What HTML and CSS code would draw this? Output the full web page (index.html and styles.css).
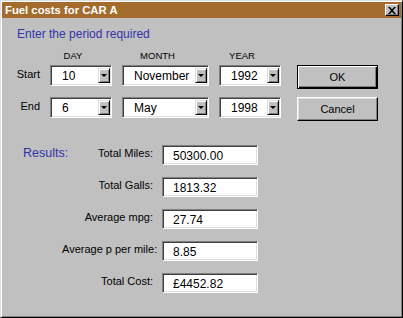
FILE: index.html
```html
<!DOCTYPE html>
<html lang="en">
<head>
  <meta charset="UTF-8">
  <title>Fuel costs for CAR A</title>
  <link rel="stylesheet" href="styles.css">
</head>
<body>
  <div class="dialog">
    <div class="titlebar">
      <span class="title">Fuel costs for CAR A</span>
      <span class="close">
        <svg width="8" height="7" viewBox="0 0 8 7"><path d="M0 0h2l2 2.2L6 0h2L5 3.5 8 7H6L4 4.8 2 7H0l3-3.5z" fill="#000"/></svg>
      </span>
    </div>

    <div class="content">
      <p class="prompt">Enter the period required</p>

      <div class="col-heads">
        <span></span>
        <span>DAY</span>
        <span>MONTH</span>
        <span>YEAR</span>
      </div>

      <div class="period">
        <label class="row-label">Start</label>
        <div class="combo"><span>10</span><i class="drop"></i></div>
        <div class="combo"><span>November</span><i class="drop"></i></div>
        <div class="combo"><span>1992</span><i class="drop"></i></div>
        <button class="btn default">OK</button>

        <label class="row-label">End</label>
        <div class="combo"><span>6</span><i class="drop"></i></div>
        <div class="combo"><span>May</span><i class="drop"></i></div>
        <div class="combo"><span>1998</span><i class="drop"></i></div>
        <button class="btn">Cancel</button>
      </div>

      <div class="results">
        <span class="results-head">Results:</span>
        <span class="field-label">Total Miles:</span>
        <div class="field">50300.00</div>

        <span></span>
        <span class="field-label">Total Galls:</span>
        <div class="field">1813.32</div>

        <span></span>
        <span class="field-label">Average mpg:</span>
        <div class="field">27.74</div>

        <span></span>
        <span class="field-label">Average p per mile:</span>
        <div class="field">8.85</div>

        <span></span>
        <span class="field-label">Total Cost:</span>
        <div class="field">£4452.82</div>
      </div>
    </div>
  </div>
</body>
</html>
```

FILE: styles.css
```css
* {
  box-sizing: border-box;
}
body {
  margin: 0;
  font-family: "Liberation Sans", Arial, sans-serif;
  color: #000;
  background: #c0c0c0;
}
.dialog {
  width: 403px;
  height: 318px;
  padding: 1px;
  background: #c0c0c0;
  border: 1px solid;
  border-color: #dfdfdf #000 #000 #dfdfdf;
  box-shadow: inset 1px 1px #fff, inset -1px -1px #808080;
}
.titlebar {
  height: 16px;
  background: #a46c2c;
  display: flex;
  align-items: center;
  justify-content: space-between;
  padding: 0 2px 0 3px;
}
.title {
  color: #fff;
  font-weight: bold;
  font-size: 11.3px;
}
.close {
  width: 14px;
  height: 12px;
  background: #c0c0c0;
  border: 1px solid;
  border-color: #fff #000 #000 #fff;
  box-shadow: inset -1px -1px #808080;
  display: flex;
  align-items: center;
  justify-content: center;
}
.content {
  padding-top: 9px;
}
.prompt {
  margin: 0 0 9px 15px;
  font-size: 12px;
  line-height: 14px;
  color: #3333aa;
}
.col-heads, .period {
  display: grid;
  grid-template-columns: 38px 62px 87px 62px 87px;
  column-gap: 10px;
}
.col-heads {
  font-size: 9.5px;
  line-height: 12px;
  height: 12px;
  margin-bottom: 3px;
}
.col-heads span {
  text-align: center;
  padding-right: 16px;
}
.period {
  grid-template-rows: 24px 24px;
  row-gap: 8px;
  align-items: start;
}
.row-label {
  font-size: 11px;
  line-height: 18px;
  text-align: right;
}
.combo {
  height: 21px;
  background: #fff;
  border: 1px solid;
  border-color: #808080 #fff #fff #808080;
  box-shadow: inset 1px 1px #404040, inset -1px -1px #dfdfdf;
  display: flex;
  align-items: center;
  justify-content: space-between;
  padding: 2px 1px 2px 11px;
  font-size: 12px;
}
.drop {
  width: 12px;
  height: 15px;
  background: #c0c0c0;
  border: 1px solid;
  border-color: #dfdfdf #000 #000 #dfdfdf;
  box-shadow: inset 1px 1px #fff, inset -1px -1px #808080;
  display: flex;
  align-items: center;
  justify-content: center;
}
.drop::after {
  content: "";
  border-left: 3px solid transparent;
  border-right: 3px solid transparent;
  border-top: 3px solid #000;
}
.btn {
  justify-self: end;
  width: 81px;
  height: 24px;
  font-family: inherit;
  font-size: 11px;
  color: #000;
  background: #c0c0c0;
  border: 1px solid;
  border-color: #fff #000 #000 #fff;
  box-shadow: inset -1px -1px #808080, inset 1px 1px #dfdfdf;
  padding: 0;
}
.btn.default {
  border: 1px solid #000;
  box-shadow: inset 1px 1px #fff, inset -1px -1px #000, inset -2px -2px #808080;
}
.results {
  margin-top: 24px;
  display: grid;
  grid-template-columns: 60px 91px 96px;
  grid-auto-rows: 20px;
  row-gap: 12px;
  align-items: start;
}
.results-head {
  padding-left: 21px;
  font-size: 12.5px;
  line-height: 17px;
  color: #3333aa;
  white-space: nowrap;
}
.field-label {
  font-size: 11px;
  line-height: 17px;
  text-align: right;
  white-space: nowrap;
}
.field {
  margin-left: 9px;
  width: 96px;
  height: 20px;
  background: #fff;
  border: 1px solid;
  border-color: #808080 #fff #fff #808080;
  box-shadow: inset 1px 1px #404040, inset -1px -1px #dfdfdf;
  padding: 1px 0 0 10px;
  font-size: 12px;
  line-height: 18px;
}
```
